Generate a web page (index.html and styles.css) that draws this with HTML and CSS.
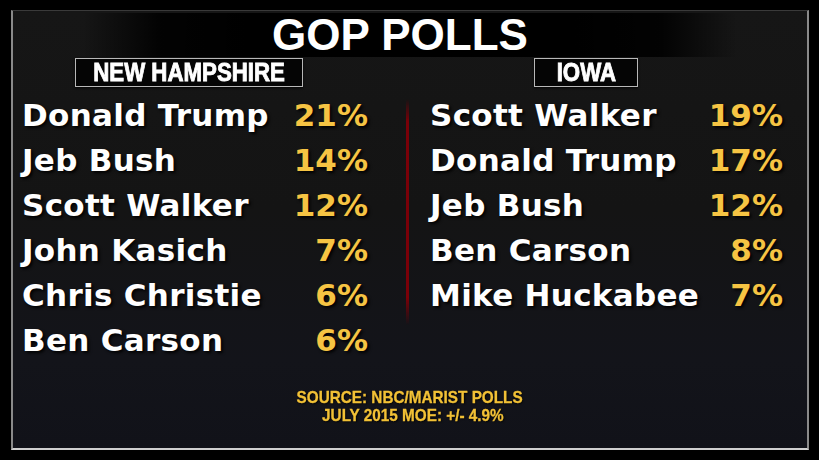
FILE: index.html
```html
<!DOCTYPE html>
<html>
<head>
<meta charset="utf-8">
<link rel="stylesheet" href="styles.css">
</head>
<body>
<div class="panel">
  <div class="title-band"><h1 class="title">GOP POLLS</h1></div>
  <div class="columns">
    <div class="col col-left">
      <div class="state-row"><span class="state state-nh"><span class="state-text">NEW HAMPSHIRE</span></span></div>
      <div class="row"><span class="name">Donald Trump</span><span class="pct">21%</span></div>
      <div class="row"><span class="name">Jeb Bush</span><span class="pct">14%</span></div>
      <div class="row"><span class="name">Scott Walker</span><span class="pct">12%</span></div>
      <div class="row"><span class="name">John Kasich</span><span class="pct">7%</span></div>
      <div class="row"><span class="name">Chris Christie</span><span class="pct">6%</span></div>
      <div class="row"><span class="name">Ben Carson</span><span class="pct">6%</span></div>
    </div>
    <div class="divider"></div>
    <div class="col col-right">
      <div class="state-row"><span class="state state-ia"><span class="state-text">IOWA</span></span></div>
      <div class="row"><span class="name">Scott Walker</span><span class="pct">19%</span></div>
      <div class="row"><span class="name">Donald Trump</span><span class="pct">17%</span></div>
      <div class="row"><span class="name">Jeb Bush</span><span class="pct">12%</span></div>
      <div class="row"><span class="name">Ben Carson</span><span class="pct">8%</span></div>
      <div class="row"><span class="name">Mike Huckabee</span><span class="pct">7%</span></div>
    </div>
  </div>
  <div class="source">
    <div class="source-line">SOURCE: NBC/MARIST POLLS</div>
    <div class="source-line source-2">JULY 2015 MOE: +/- 4.9%</div>
  </div>
</div>
</body>
</html>
```
FILE: styles.css
```css
html, body {
  margin: 0;
  padding: 0;
  background: #000;
  width: 819px;
  height: 460px;
  overflow: hidden;
}
.panel {
  box-sizing: border-box;
  margin: 10px 0 0 11px;
  width: 798px;
  height: 440px;
  border: 2px solid #8a8a8a;
  border-top-color: #3a3a3a;
  border-bottom-color: #d0d0d0;
  border-top-width: 1px;
  background: linear-gradient(180deg, #161616 0%, #141414 45%, #13141a 80%, #111219 100%);
  display: flex;
  flex-direction: column;
}
.title-band {
  height: 44px;
  margin: 2px 70px 0 70px;
  background: linear-gradient(90deg, rgba(0,0,0,0) 0%, rgba(0,0,0,0.9) 12%, #000 25%, #000 75%, rgba(0,0,0,0.9) 88%, rgba(0,0,0,0) 100%);
  display: flex;
  justify-content: center;
  align-items: center;
  padding-right: 20px;
}
.title {
  margin: 0;
  font-family: "Liberation Sans", Arial, sans-serif;
  font-weight: bold;
  font-size: 44px;
  line-height: 44px;
  color: #fff;
}
.columns {
  display: flex;
  margin-top: 2px;
}
.col {
  display: flex;
  flex-direction: column;
}
.col-left {
  margin-left: 9px;
  width: 346px;
}
.col-right {
  margin-left: 21px;
  width: 353px;
}
.divider {
  width: 3px;
  margin-left: 38px;
  margin-top: 40px;
  height: 226px;
  background: linear-gradient(180deg, rgba(120,0,8,0) 0%, #7a0008 10%, #7a0008 88%, rgba(120,0,8,0) 100%);
  filter: blur(0.6px);
}
.state-row {
  height: 34px;
  display: flex;
  align-items: flex-start;
}
.state {
  display: flex;
  justify-content: center;
  box-sizing: border-box;
  height: 29px;
  margin-top: -1px;
  background: #050505;
  border: 1px solid #b8b8b8;
  box-shadow: 0 1px 2px rgba(0,0,0,0.8);
  overflow: hidden;
}
.state-text {
  display: inline-block;
  font-family: "Liberation Sans", Arial, sans-serif;
  font-weight: bold;
  font-size: 26.5px;
  line-height: 27px;
  color: #fff;
  transform: scaleX(0.84);
  white-space: nowrap;
  -webkit-text-stroke: 0.9px #fff;
}
.state-nh {
  margin-left: 53px;
  width: 228px;
}
.state-ia {
  margin-left: 104px;
  width: 104px;
}
.row {
  display: flex;
  justify-content: space-between;
  height: 45px;
  line-height: 45px;
  font-family: "DejaVu Sans", sans-serif;
  font-weight: bold;
  font-size: 31px;
  letter-spacing: 0.3px;
  text-shadow: 2px 2px 3px rgba(0,0,0,0.9);
}
.name {
  color: #fff;
}
.pct {
  color: #f6c443;
  letter-spacing: 0;
}
.source {
  margin-top: auto;
  margin-bottom: 24px;
  display: flex;
  flex-direction: column;
  align-items: center;
  gap: 1px;
}
.source-line {
  font-family: "Liberation Sans", Arial, sans-serif;
  font-weight: bold;
  font-size: 17px;
  line-height: 17px;
  color: #f2c136;
  text-shadow: 1px 1px 2px rgba(0,0,0,0.9);
  transform: scaleX(0.9);
  white-space: nowrap;
  -webkit-text-stroke: 0.3px #f2c136;
}
.source-2 {
  margin-left: 6px;
}
```
